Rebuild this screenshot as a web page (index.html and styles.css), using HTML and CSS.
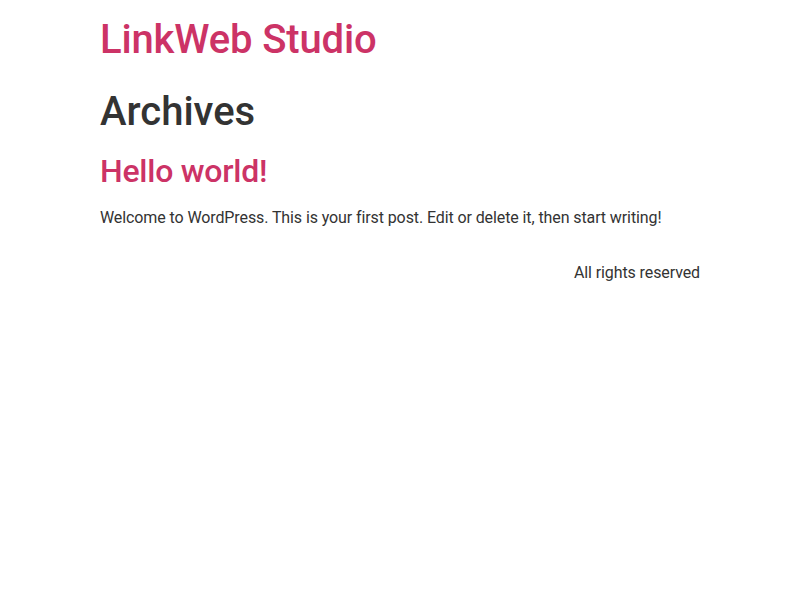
FILE: index.html
```html
<!DOCTYPE html>
<html lang="en">
<head>
<meta charset="utf-8">
<title>Archives - LinkWeb Studio</title>
<link rel="stylesheet" href="styles.css">
</head>
<body>
<header class="site-header">
  <h1 class="site-title"><a href="#">LinkWeb Studio</a></h1>
</header>
<main class="site-main">
  <div class="page-header">
    <h1 class="entry-title">Archives</h1>
  </div>
  <div class="page-content">
    <article class="post">
      <h2 class="entry-title"><a href="#">Hello world!</a></h2>
      <p>Welcome to WordPress. This is your first post. Edit or delete it, then start writing!</p>
    </article>
  </div>
</main>
<footer class="site-footer">
  <div class="copyright"><p>All rights reserved</p></div>
</footer>
</body>
</html>
```
FILE: styles.css
```css
html { line-height: 1.15; }
body {
  margin: 0;
  font-family: Roboto, "Liberation Sans", sans-serif;
  font-size: 1rem;
  font-weight: 400;
  line-height: 1.5;
  color: #333;
  background: #fff;
  letter-spacing: -0.1px;
}
a { color: #c36; text-decoration: none; }
h1, h2 {
  margin-top: .5rem;
  margin-bottom: 1rem;
  font-weight: 500;
  line-height: 1.2;
  color: inherit;
  letter-spacing: 0;
}
h1 { font-size: 2.5rem; }
h2 { font-size: 2rem; letter-spacing: -0.25px; }
p { margin-top: 0; margin-bottom: .9rem; }

.site-header,
.site-main,
.site-footer {
  max-width: 600px;
  margin-left: auto;
  margin-right: auto;
}
.site-header {
  padding-top: 1rem;
  padding-bottom: 1rem;
}
.site-title { margin: 0; letter-spacing: -0.15px; }
.site-footer {
  padding-top: 1rem;
  padding-bottom: 1rem;
  display: flex;
  justify-content: flex-end;
}
.copyright p { margin: 0; }
```
